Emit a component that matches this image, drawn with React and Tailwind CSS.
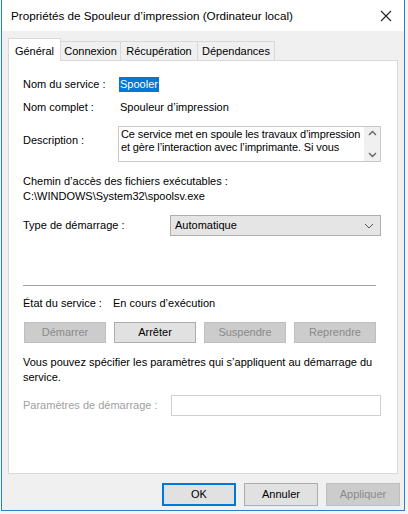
import React from "react";

const font = { fontFamily: "'Liberation Sans', Arial, sans-serif" };

function Btn({ children, disabled, primary, className = "" }) {
  const base = "flex items-center justify-center text-[11px] border ";
  let s;
  if (disabled) s = "bg-[#cccccc] border-[#bfbfbf] text-[#8a8a8a]";
  else if (primary) s = "bg-[#e1e1e1] border-[#0078d7] text-black shadow-[inset_0_0_0_1px_#0078d7]";
  else s = "bg-[#e1e1e1] border-[#adadad] text-black";
  return <div className={base + s + " " + className}>{children}</div>;
}

export default function App() {
  return (
    <div className="w-[408px] h-[514px] bg-[#f4f4f4] overflow-hidden" style={font}>
      <div className="ml-[1px] w-[404px] h-[511px] border-x border-b border-[#2a7fd0] bg-[#f0f0f0] flex flex-col">
        {/* Title bar */}
        <div className="h-[31px] bg-white flex items-center justify-between pl-[9px] pr-[10px] shrink-0">
          <span className="text-[11.7px] text-black">Propriétés de Spouleur d’impression (Ordinateur local)</span>
          <svg width="12" height="12" viewBox="0 0 12 12" className="mr-[2px]">
            <path d="M1 1 L11 11 M11 1 L1 11" stroke="#222" strokeWidth="1.1" />
          </svg>
        </div>
        {/* Tabs */}
        <div className="pl-[6px] pt-[7px] flex items-end h-[29px] shrink-0 relative z-10 text-[11px]">
          <div className="w-[53px] bg-white border-x border-t border-[#d9d9d9] flex items-start pt-[4px] justify-center -mb-[1px] h-[23px]">Général</div>
          <div className="w-[60px] h-[19px] bg-[#f0f0f0] border-t border-r border-[#d9d9d9] flex items-center justify-center">Connexion</div>
          <div className="w-[77px] h-[19px] bg-[#f0f0f0] border-t border-r border-[#d9d9d9] flex items-center justify-center">Récupération</div>
          <div className="w-[77px] h-[19px] bg-[#f0f0f0] border-t border-r border-[#d9d9d9] flex items-center justify-center">Dépendances</div>
        </div>
        {/* Panel */}
        <div className="ml-[6px] w-[390px] h-[414px] bg-white border border-[#d9d9d9] shrink-0 pl-[14px] pt-[12px] text-[11px] text-black">
          <div className="flex h-[23px] items-center">
            <span className="w-[96px]">Nom du service :</span>
            <span className="bg-[#0078d7] text-white px-[1px] leading-[15px]">Spooler</span>
          </div>
          <div className="flex h-[23px] items-center">
            <span className="w-[97px]">Nom complet :</span>
            <span>Spouleur d’impression</span>
          </div>
          <div className="flex mt-[7px]">
            <span className="w-[95px] pt-[6px]">Description :</span>
            <div className="w-[263px] h-[36px] border border-[#c8c8c8] flex">
              <div className="flex-1 pl-[2px] pt-[1px] leading-[13px] whitespace-nowrap overflow-hidden tracking-[-0.12px]">
                <div>Ce service met en spoule les travaux d’impression</div>
                <div>et gère l’interaction avec l’imprimante. Si vous</div>
              </div>
              <div className="w-[16px] bg-[#f0f0f0] flex flex-col items-center justify-between py-[3px]">
                <svg width="9" height="6" viewBox="0 0 9 6"><path d="M1 5 L4.5 1.5 L8 5" stroke="#606060" strokeWidth="1.3" fill="none" /></svg>
                <svg width="9" height="6" viewBox="0 0 9 6"><path d="M1 1 L4.5 4.5 L8 1" stroke="#606060" strokeWidth="1.3" fill="none" /></svg>
              </div>
            </div>
          </div>
          <div className="mt-[12px] leading-[15px]">
            <div>Chemin d’accès des fichiers exécutables :</div>
            <div>C:\WINDOWS\System32\spoolsv.exe</div>
          </div>
          <div className="flex items-center mt-[11px]">
            <span className="w-[147px]">Type de démarrage :</span>
            <div className="w-[211px] h-[21px] bg-[#e5e5e5] border border-[#adadad] flex items-center justify-between pl-[4px] pr-[6px]">
              <span>Automatique</span>
              <svg width="10" height="6" viewBox="0 0 10 6"><path d="M1 1 L5 5 L9 1" stroke="#555" strokeWidth="1" fill="none" /></svg>
            </div>
          </div>
          <div className="w-[353px] h-px bg-[#a0a0a0] mt-[49px]" />
          <div className="flex items-center h-[15px] mt-[10px]">
            <span className="w-[90px]">État du service :</span>
            <span>En cours d’exécution</span>
          </div>
          <div className="flex gap-[8px] mt-[11px] pl-[1px]">
            <Btn disabled className="w-[82px] h-[21px]">Démarrer</Btn>
            <Btn className="w-[82px] h-[21px]">Arrêter</Btn>
            <Btn disabled className="w-[82px] h-[21px]">Suspendre</Btn>
            <Btn disabled className="w-[82px] h-[21px]">Reprendre</Btn>
          </div>
          <div className="mt-[12px] leading-[15px]">
            <div>Vous pouvez spécifier les paramètres qui s’appliquent au démarrage du</div>
            <div>service.</div>
          </div>
          <div className="flex items-center mt-[10px]">
            <span className="w-[148px] text-[#a0a0a0]">Paramètres de démarrage :</span>
            <div className="w-[210px] h-[21px] border border-[#d0d0d0] bg-white" />
          </div>
        </div>
        {/* Bottom buttons */}
        <div className="flex justify-end gap-[8px] pr-[4px] mt-[9px]">
          <Btn primary className="w-[74px] h-[23px]">OK</Btn>
          <Btn className="w-[74px] h-[23px]">Annuler</Btn>
          <Btn disabled className="w-[74px] h-[23px]">Appliquer</Btn>
        </div>
      </div>
    </div>
  );
}
